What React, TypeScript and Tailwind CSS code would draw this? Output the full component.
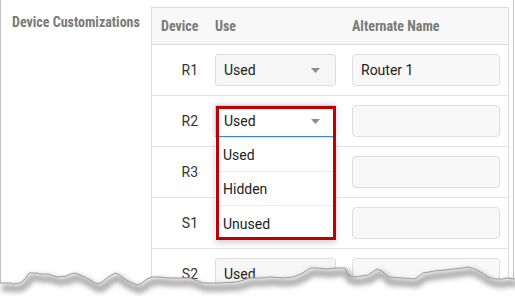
import React from 'react';

type Row = { device: string; use: string; name: string; open?: boolean };

// R3 and S1 sit under the open list, so their selects show no text
const rows: Row[] = [
  { device: 'R1', use: 'Used', name: 'Router 1' },
  { device: 'R2', use: 'Used', name: '', open: true },
  { device: 'R3', use: '', name: '' },
  { device: 'S1', use: '', name: '' },
  { device: 'S2', use: 'Used', name: '' },
];

const options = ['Used', 'Hidden', 'Unused'];

// torn paper edge along the bottom of the screenshot
const edge: [number, number][] = [
  [0, 283], [10, 283], [13, 284], [20, 283], [25, 279], [29, 273], [37, 273], [40, 274], [48, 274],
  [57, 277], [67, 276], [70, 274], [75, 273], [80, 275], [85, 277], [90, 280], [95, 283], [98, 284],
  [102, 282], [108, 277], [115, 273], [118, 274], [123, 278], [130, 282], [137, 285], [142, 283],
  [147, 279], [152, 277], [160, 277], [170, 278], [190, 278], [203, 283], [220, 283], [237, 282],
  [250, 278], [260, 278], [270, 277], [283, 278], [293, 277], [303, 273], [310, 268], [317, 268],
  [327, 269], [337, 268], [345, 268], [348, 275], [355, 277], [368, 275], [377, 269], [382, 271],
  [388, 277], [402, 278], [415, 279], [423, 273], [435, 271], [445, 270], [462, 268], [468, 267],
  [475, 269], [482, 273], [488, 277], [495, 279], [502, 279], [507, 278], [515, 279],
];

const Caret = () => (
  <svg width="9" height="5" viewBox="0 0 9 5">
    <path d="M0 0h9L4.5 5z" fill="#8c8c8c" />
  </svg>
);

const UseSelect = ({ value, open }: { value: string; open?: boolean }) => {
  if (!open) {
    return (
      <div className="h-[32px] w-full flex items-center justify-between pl-[8px] pr-[15px] bg-[#f6f6f6] border border-[#dcdcdc] rounded-[3px] text-[14px] text-[#222]">
        <span>{value}</span>
        <Caret />
      </div>
    );
  }
  return (
    <div className="relative w-full">
      <div className="h-[32px] w-full flex items-center justify-between pl-[8px] pr-[15px] bg-white border border-[#bcd4ee] border-b-[#3b86d6] shadow-[0_0_6px_rgba(59,134,214,0.35)] text-[14px] text-[#222]">
        <span>{value}</span>
        <Caret />
      </div>
      <div className="absolute left-0 top-[33px] w-full bg-white shadow-[0_3px_6px_rgba(0,0,0,0.18)] z-10">
        {options.map((o, i) => (
          <div
            key={o}
            className={`h-[34px] flex items-center pl-[8px] pt-[2px] text-[14px] text-[#222] ${i < options.length - 1 ? 'border-b border-[#ececec]' : ''}`}
          >
            {o}
          </div>
        ))}
      </div>
      <div className="absolute left-[1px] top-[1px] w-[120px] h-[134px] border-[3px] border-[#c00000] z-20" />
    </div>
  );
};

const App = () => {
  const linePts = edge.map(([x, y]) => `${x},${y}`).join(' ');
  const fillPts = `${linePts} 515,296 0,296`;

  return (
    <div className="relative w-[515px] h-[296px] overflow-hidden bg-white font-['Roboto',sans-serif]">
      <div className="w-[514px] h-full flex pt-[7px] border-l border-r border-[#c2c2c2]">
        <div className="w-[150px] pl-[11px] pt-[5px] text-[14px] leading-[20px] font-bold text-[#7a7a7a] font-['Liberation_Sans_Narrow','Roboto_Condensed',Roboto,sans-serif]">
          Device Customizations
        </div>
        <div className="w-[358px] self-start border border-b-0 border-[#dcdcdc] bg-white">
          <div className="h-[37px] flex items-center border-b border-[#dedede] bg-[#f8f8f8] text-[14px] font-bold text-[#7a7a7a] font-['Liberation_Sans_Narrow','Roboto_Condensed',Roboto,sans-serif]">
            <div className="w-[55px] px-[9px]">Device</div>
            <div className="w-[137px] px-[8px]">Use</div>
            <div className="flex-1 px-[8px]">Alternate Name</div>
          </div>
          {rows.map((r) => (
            <div key={r.device} className="h-[51px] flex items-center border-b border-[#e2e2e2]">
              <div className="w-[55px] px-[9px] text-right text-[14px] text-[#333]">{r.device}</div>
              <div className="w-[137px] px-[8px]">
                <UseSelect value={r.use} open={r.open} />
              </div>
              <div className="flex-1 px-[8px]">
                <div className="h-[32px] w-full flex items-center pl-[8px] bg-[#f8f8f8] border border-[#dedede] rounded-[4px] text-[14px] text-[#222]">
                  {r.name}
                </div>
              </div>
            </div>
          ))}
        </div>
      </div>

      <svg className="absolute left-0 top-0 pointer-events-none z-30" width="515" height="296" viewBox="0 0 515 296">
        <defs>
          <filter id="tornShadow" x="-5%" y="-50%" width="110%" height="200%">
            <feGaussianBlur stdDeviation="2.5" />
          </filter>
        </defs>
        <polygon points={fillPts} fill="#ffffff" />
        <polyline
          points={linePts}
          fill="none"
          stroke="#8a8a8a"
          strokeWidth="7"
          opacity="0.7"
          transform="translate(2 5)"
          filter="url(#tornShadow)"
        />
        <polyline points={linePts} fill="none" stroke="#9c9c9c" strokeWidth="1" />
      </svg>
    </div>
  );
};

export default App;
